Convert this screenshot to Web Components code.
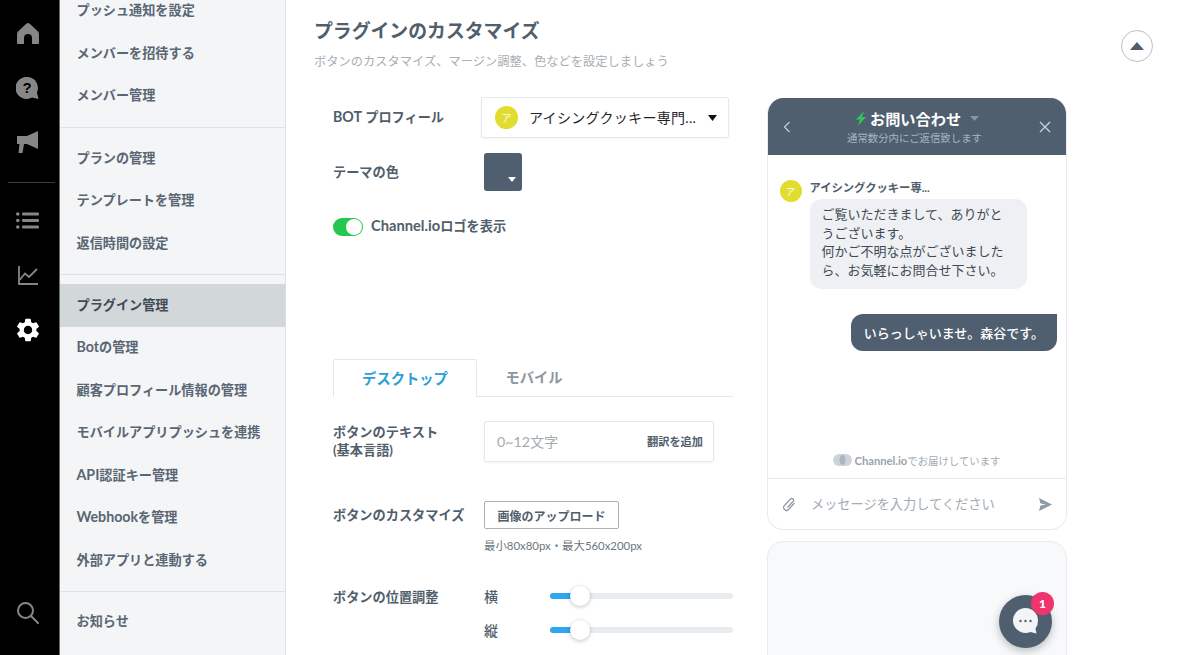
<!DOCTYPE html>
<html lang="ja">
<head>
<meta charset="utf-8">
<title>プラグインのカスタマイズ</title>
<style>
  html, body { margin: 0; height: 655px; overflow: hidden; background: #fff; }
  body { display: flex; font-family: Lato, "Noto Sans CJK JP", sans-serif; color: #515e6b; }
  .la { font-size: 14.2px; }
</style>
</head>
<body>
<app-rail></app-rail>
<side-nav>
  <nav-group>
    <nav-item>プッシュ通知を設定</nav-item>
    <nav-item>メンバーを招待する</nav-item>
    <nav-item>メンバー管理</nav-item>
  </nav-group>
  <nav-group>
    <nav-item>プランの管理</nav-item>
    <nav-item>テンプレートを管理</nav-item>
    <nav-item>返信時間の設定</nav-item>
  </nav-group>
  <nav-group>
    <nav-item active>プラグイン管理</nav-item>
    <nav-item><span class="la">Bot</span>の管理</nav-item>
    <nav-item>顧客プロフィール情報の管理</nav-item>
    <nav-item>モバイルアプリプッシュを連携</nav-item>
    <nav-item><span class="la">API</span>認証キー管理</nav-item>
    <nav-item><span class="la">Webhook</span>を管理</nav-item>
    <nav-item>外部アプリと連動する</nav-item>
  </nav-group>
  <nav-group>
    <nav-item>お知らせ</nav-item>
  </nav-group>
</side-nav>
<plugin-page></plugin-page>

<script>
// shadow root helper, every element below uses it
function shadow(el, html) {
  const template = document.createElement('template');
  template.innerHTML = html;
  el.attachShadow({ mode: 'open' }).appendChild(template.content.cloneNode(true));
}

class AppRail extends HTMLElement {
  connectedCallback() {
    shadow(this, `
    <style>
      :host { display: flex; flex-direction: column; flex: none; width: 60px; height: 655px; box-sizing: border-box; background: #000; border-right: 1px solid #6d6d6d; padding: 6px 4px 15px 0; }
      .i { height: 54.7px; display: flex; align-items: center; justify-content: center; flex: none; }
      svg { display: block; fill: #868686; }
      hr { border: 0; height: 1px; background: #3d3d3d; margin: 12px 0 10px 8px; flex: none; }
      .end { margin-top: auto; }
      text { font: 700 15px "Liberation Sans", sans-serif; fill: #000; }
    </style>
    <div class="i"><svg width="22" height="22" viewBox="0 0 22 22"><path d="M11 1 Q12 1 13 2 L21 9.5 Q22 10.5 22 12 V21 Q22 22 21 22 H15 V16 a4 4 0 0 0 -8 0 V22 H1 Q0 22 0 21 V12 Q0 10.5 1 9.5 L9 2 Q10 1 11 1Z"/></svg></div>
    <div class="i"><svg width="23" height="23" viewBox="0 0 23 23"><path d="M11 0 a11 11 0 0 1 10 15.5 L22.5 22 L16 20.5 A11 11 0 1 1 11 0Z"/><text x="11" y="16" text-anchor="middle">?</text></svg></div>
    <div class="i"><svg width="22" height="23" viewBox="0 0 22 23"><path d="M21 0 V18 L10 13 H7 L5.5 22 H1.5 L2.5 13 H0 V5 H10Z"/></svg></div>
    <hr>
    <div class="i"><svg width="23" height="17" viewBox="0 0 23 17"><circle cx="1.8" cy="2" r="1.8"/><circle cx="1.8" cy="8.5" r="1.8"/><circle cx="1.8" cy="15" r="1.8"/><rect x="6" y="0.5" width="17" height="3" rx="1"/><rect x="6" y="7" width="17" height="3" rx="1"/><rect x="6" y="13.5" width="17" height="3" rx="1"/></svg></div>
    <div class="i"><svg width="20" height="19" viewBox="0 0 20 19" style="fill:none;stroke:#868686;stroke-width:1.8"><path d="M1 0 V18 H20"/><path d="M1.5 14 L7 7.5 L11 11 L19 3"/></svg></div>
    <div class="i"><svg width="28" height="28" viewBox="0 0 24 24" style="fill:#fff"><path d="M19.14 12.94c.04-.3.06-.61.06-.94 0-.32-.02-.64-.07-.94l2.03-1.58c.18-.14.23-.41.12-.61l-1.92-3.32c-.12-.22-.37-.29-.59-.22l-2.39.96c-.5-.38-1.03-.7-1.62-.94l-.36-2.54c-.04-.24-.24-.41-.48-.41h-3.84c-.24 0-.43.17-.47.41l-.36 2.54c-.59.24-1.13.57-1.62.94l-2.39-.96c-.22-.08-.47 0-.59.22L2.74 8.87c-.12.21-.08.47.12.61l2.03 1.58c-.05.3-.09.63-.09.94s.02.64.07.94l-2.03 1.58c-.18.14-.23.41-.12.61l1.92 3.32c.12.22.37.29.59.22l2.39-.96c.5.38 1.03.7 1.62.94l.36 2.54c.05.24.24.41.48.41h3.84c.24 0 .44-.17.47-.41l.36-2.54c.59-.24 1.13-.56 1.62-.94l2.39.96c.22.08.47 0 .59-.22l1.92-3.32c.12-.22.07-.47-.12-.61l-2.01-1.58zM12 15.6c-1.98 0-3.6-1.62-3.6-3.6s1.62-3.6 3.6-3.6 3.6 1.62 3.6 3.6-1.62 3.6-3.6 3.6z"/></svg></div>
    <div class="i end"><svg width="22" height="22" viewBox="0 0 22 22" style="fill:none;stroke:#868686;stroke-width:2"><circle cx="8.5" cy="8.5" r="7.5"/><path d="M14 14 L21 21" stroke-linecap="round"/></svg></div>
    `);
  }
}

class SideNav extends HTMLElement {
  constructor() {
    super();
    shadow(this, `
    <style>
      :host { display: block; flex: none; width: 226px; height: 655px; box-sizing: border-box; background: #f3f5f7; border-right: 1px solid #dcdfe2; overflow: hidden; }
      .scroll { margin-top: -10.5px; }
    </style>
    <div class="scroll"><slot></slot></div>`);
  }
}

class NavGroup extends HTMLElement {
  constructor() {
    super();
    shadow(this, `
    <style>
      :host { display: block; padding: 9px 0 10px; border-bottom: 1px solid #dfe2e5; }
      :host(:first-child) { padding-top: 0; }
      :host(:nth-child(2)) { padding-bottom: 9.5px; }
      :host(:nth-child(3)) { padding-bottom: 9px; }
      :host(:last-child) { border-bottom: 0; }
    </style>
    <slot></slot>`);
  }
}

class NavItem extends HTMLElement {
  constructor() {
    super();
    shadow(this, `
    <style>
      :host { display: flex; align-items: center; height: 42.5px; box-sizing: border-box; padding: 0 0 2px 16.5px; font-size: 13.15px; font-weight: 700; color: #5a6673; white-space: nowrap; }
      :host([active]) { background: #d2d7da; color: #3f4a55; }
    </style>
    <slot></slot>`);
  }
}

class PluginPage extends HTMLElement {
  connectedCallback() {
    shadow(this, `
    <style>
      :host { display: block; flex: 1; min-width: 0; height: 655px; overflow: hidden; }
      .head { display: flex; justify-content: space-between; height: 97px; box-sizing: border-box; padding: 19px 47px 0 28px; }
      h1 { margin: 0; font-size: 18.85px; line-height: 24px; font-weight: 700; color: #515e6b; }
      .sub { margin-top: 9px; font-size: 12.25px; line-height: 20px; color: #a7aeb4; }
      .top { width: 32px; height: 32px; box-sizing: border-box; margin-top: 11px; border: 1px solid #bdc0c3; border-radius: 50%; display: flex; align-items: center; justify-content: center; }
      .body { display: flex; gap: 34px; padding-left: 47px; }
      .form { width: 400px; flex: none; }
      .la { font-size: 14.7px; }
      .mt15 { margin-top: 15px; }
      .mt27 { margin-top: 27px; }
      .mt123 { margin-top: 123px; }
      .mt24 { margin-top: 24px; }
      .mt39 { margin-top: 39px; }
      .mt25 { margin-top: 25px; }
    </style>
    <div class="head">
      <div><h1>プラグインのカスタマイズ</h1><div class="sub">ボタンのカスタマイズ、マージン調整、色などを設定しましょう</div></div>
      <div class="top"><svg width="14" height="9" viewBox="0 0 14 9"><path d="M7 0 L14 8 H0Z" fill="#4f5f70"/></svg></div>
    </div>
    <div class="body">
      <div class="form">
        <form-row label="&lt;span class='la'&gt;BOT&lt;/span&gt; プロフィール" col="148"><bot-select></bot-select></form-row>
        <form-row class="mt15" label="テーマの色" col="151"><color-swatch></color-swatch></form-row>
        <logo-toggle class="mt27"><span class="la">Channel.io</span>ロゴを表示</logo-toggle>
        <device-tabs class="mt123"></device-tabs>
        <form-row class="mt24" label="ボタンのテキスト&lt;br&gt;(基本言語)" col="151"><text-field></text-field></form-row>
        <form-row class="mt39" label="ボタンのカスタマイズ" col="151" top pad="5"><upload-field></upload-field></form-row>
        <form-row class="mt25" label="ボタンの位置調整" col="151" top pad="9">
          <range-row name="横"></range-row>
          <range-row name="縦"></range-row>
        </form-row>
      </div>
      <chat-preview></chat-preview>
    </div>`);
  }
}

class FormRow extends HTMLElement {
  connectedCallback() {
    const col = this.getAttribute('col');
    const pad = this.getAttribute('pad') || 0;
    shadow(this, `
    <style>
      :host { display: grid; grid-template-columns: ${col}px 1fr; align-items: center; }
      :host([top]) { align-items: start; }
      .l { font-size: 13.2px; font-weight: 700; line-height: 18px; color: #515e6b; white-space: nowrap; padding-top: ${pad}px; padding-bottom: 1px; }
      .la { font-size: 14.2px; }
    </style>
    <div class="l">${this.getAttribute('label')}</div>
    <div><slot></slot></div>`);
  }
}

class BotSelect extends HTMLElement {
  constructor() {
    super();
    shadow(this, `
    <style>
      :host { display: flex; align-items: center; width: 248px; height: 41px; box-sizing: border-box; border: 1px solid #e6e8ea; border-radius: 2px; box-shadow: 0 1px 2px #0000000d; padding: 0 11px 0 13px; }
      .a { width: 23px; height: 23px; border-radius: 50%; background: #e1dc2e; color: #fff; font-size: 10px; display: flex; align-items: center; justify-content: center; flex: none; }
      .t { margin-left: 11px; padding-bottom: 2px; font-size: 14px; color: #1f2428; white-space: nowrap; flex: 1; letter-spacing: .3px; }
    </style>
    <div class="a">ア</div><div class="t">アイシングクッキー専門...</div>
    <svg width="9" height="6" viewBox="0 0 9 6"><path d="M0 0 H9 L4.5 6Z" fill="#111"/></svg>`);
  }
}

class ColorSwatch extends HTMLElement {
  constructor() {
    super();
    shadow(this, `
    <style>
      :host { display: flex; align-items: flex-end; justify-content: flex-end; width: 38px; height: 38px; box-sizing: border-box; background: #4f5f70; border-radius: 3px; padding: 0 6px 9px 0; }
    </style>
    <svg width="8" height="5" viewBox="0 0 8 5"><path d="M0 0 H8 L4 5Z" fill="#fff"/></svg>`);
  }
}

class LogoToggle extends HTMLElement {
  constructor() {
    super();
    shadow(this, `
    <style>
      :host { display: flex; align-items: center; gap: 8px; height: 18px; font-size: 13.2px; font-weight: 700; color: #515e6b; }
      .sw { width: 30px; height: 18px; box-sizing: border-box; border-radius: 9px; background: #24c84f; display: flex; justify-content: flex-end; padding: 1px; flex: none; }
      .sw i { width: 16px; height: 16px; border-radius: 50%; background: #fff; }
      .tx { padding-bottom: 3px; white-space: nowrap; }
    </style>
    <div class="sw"><i></i></div><div class="tx"><slot></slot></div>`);
  }
}

class DeviceTabs extends HTMLElement {
  constructor() {
    super();
    shadow(this, `
    <style>
      :host { display: flex; height: 38px; box-sizing: border-box; border-bottom: 1px solid #e6e8ea; font-size: 14.3px; font-weight: 700; }
      div { display: flex; align-items: center; justify-content: center; height: 38px; box-sizing: border-box; padding-bottom: 3px; }
      .on { width: 144px; color: #2a9fd8; background: #fff; border: 1px solid #e6e8ea; border-bottom: 0; border-radius: 2px 2px 0 0; }
      .off { width: 114px; color: #8f979e; }
    </style>
    <div class="on">デスクトップ</div><div class="off">モバイル</div>`);
  }
}

class TextField extends HTMLElement {
  constructor() {
    super();
    shadow(this, `
    <style>
      :host { display: flex; align-items: center; justify-content: space-between; width: 230px; height: 41px; box-sizing: border-box; border: 1px solid #e6e8ea; border-radius: 2px; box-shadow: 0 1px 2px #0000000d; padding: 0 10px 2px 12px; }
      .p { font-size: 14.2px; color: #a4abb1; }
      .b { font-size: 11.2px; font-weight: 700; color: #515e6b; }
    </style>
    <span class="p">0~12文字</span><span class="b">翻訳を追加</span>`);
  }
}

class UploadField extends HTMLElement {
  constructor() {
    super();
    shadow(this, `
    <style>
      :host { display: block; }
      .b { display: flex; align-items: center; justify-content: center; width: 135px; height: 28px; box-sizing: border-box; border: 1px solid #a9b0b6; border-radius: 2px; font-size: 12px; font-weight: 700; color: #515e6b; }
      .h { margin-top: 9px; font-size: 11.4px; line-height: 16px; color: #6b7680; white-space: nowrap; }
    </style>
    <div class="b">画像のアップロード</div><div class="h">最小80x80px・最大560x200px</div>`);
  }
}

class RangeRow extends HTMLElement {
  connectedCallback() {
    shadow(this, `
    <style>
      :host { display: flex; align-items: center; height: 34px; width: 249px; }
      span { width: 66px; font-size: 14px; font-weight: 500; color: #515e6b; flex: none; }
      .track { flex: 1; height: 6px; border-radius: 3px; background: #e9ecee; display: flex; align-items: center; }
      .fill { width: 25px; height: 6px; border-radius: 3px 0 0 3px; background: #2ea7ee; }
      .knob { width: 20px; height: 20px; border-radius: 50%; background: #fff; box-shadow: 0 1px 4px #00000040; margin-left: -5px; }
    </style>
    <span>${this.getAttribute('name')}</span>
    <div class="track"><div class="fill"></div><div class="knob"></div></div>`);
  }
}

class ChatPreview extends HTMLElement {
  connectedCallback() {
    shadow(this, `
    <style>
      :host { display: block; width: 300px; flex: none; position: relative; margin-top: 1px; }
      .card { height: 432px; box-sizing: border-box; border: 1.5px solid #e9ebee; border-top: 0; border-radius: 16px; overflow: hidden; display: flex; flex-direction: column; background: #fff; }
      .hd { height: 57px; flex: none; background: #4f5f70; display: grid; grid-template-columns: 40px 1fr 40px; align-items: center; justify-items: center; box-sizing: border-box; }
      .bk { margin-right: 3px; }
      .cl { margin-right: 3px; }
      .ti { display: flex; align-items: center; justify-content: center; gap: 3px; font-size: 15.2px; font-weight: 700; line-height: 22px; color: #fff; }
      .su { font-size: 10.4px; line-height: 15px; padding: 1px 5px 0 0; color: #a9b4bf; text-align: center; }
      .msgs { flex: 1; display: flex; flex-direction: column; padding-top: 25px; }
      .who { display: grid; grid-template-columns: 22px 1fr; column-gap: 8px; padding-left: 11.5px; }
      .av { width: 22px; height: 22px; border-radius: 50%; background: #e1dc2e; color: #fff; font-size: 9px; display: flex; align-items: center; justify-content: center; }
      .nm { font-size: 11.3px; font-weight: 700; line-height: 16px; color: #515e6b; }
      .bub { grid-column: 2; width: 217px; box-sizing: border-box; padding: 6px 12px 10px; background: #eef0f3; border-radius: 12px; font-size: 13px; line-height: 18.5px; color: #3f4a55; margin-top: -3px; }
      .me { align-self: flex-end; margin: 25px 9.5px 0 0; padding: 0 12.5px 1px; height: 37px; display: flex; align-items: center; box-sizing: border-box; background: #4f5f70; color: #fff; border-radius: 12px 0 12px 12px; font-size: 13px; font-weight: 500; white-space: nowrap; }
      .pw { margin-top: auto; display: flex; align-items: center; justify-content: center; gap: 3px; height: 18px; margin-bottom: 9px; padding-right: 1px; font-size: 10.4px; color: #a3abb3; }
      .pw b { color: #9aa3ac; font-size: 11.2px; }
      .inp { height: 50px; flex: none; border-top: 1px solid #e6e8ea; display: flex; align-items: center; padding: 0 14px; gap: 15px; }
      .inp span { flex: 1; font-size: 13.2px; padding-bottom: 1px; color: #a3abb3; white-space: nowrap; }
      .card2 { margin-top: 11px; height: 200px; box-sizing: border-box; border: 1.5px solid #e9ebee; border-radius: 16px; background: #f7f9fb; }
      .fab { position: absolute; left: 232px; top: 497px; width: 53px; height: 53px; border-radius: 50%; background: #4f5f70; box-shadow: 0 3px 8px #00000040; display: flex; align-items: center; justify-content: center; }
      .badge { position: absolute; left: 32px; top: -3px; width: 23px; height: 23px; border-radius: 50%; background: #f0346e; color: #fff; font-size: 12px; font-weight: 900; display: flex; align-items: center; justify-content: center; }
    </style>
    <div class="card">
      <div class="hd">
        <svg class="bk" width="8" height="12" viewBox="0 0 8 12"><path d="M6.5 1 L1.5 6 L6.5 11" fill="none" stroke="#c3cad1" stroke-width="1.3"/></svg>
        <div>
          <div class="ti"><svg width="12" height="15" viewBox="0 0 13 16"><path d="M10 0 L1 9 H5.5 L3 16 L12 6.5 H7.5Z" fill="#2fc65c"/></svg><span>お問い合わせ</span><svg style="margin-left:6px" width="9" height="5" viewBox="0 0 9 5"><path d="M0 0 H9 L4.5 5Z" fill="#8896a3"/></svg></div>
          <div class="su">通常数分内にご返信致します</div>
        </div>
        <svg class="cl" width="12" height="12" viewBox="0 0 12 12"><path d="M1 1 L11 11 M11 1 L1 11" fill="none" stroke="#c9d0d6" stroke-width="1.4"/></svg>
      </div>
      <div class="msgs">
        <div class="who">
          <div class="av">ア</div><div class="nm">アイシングクッキー専...</div>
          <div class="bub">ご覧いただきまして、ありがとうございます。<br>何かご不明な点がございましたら、お気軽にお問合せ下さい。</div>
        </div>
        <div class="me">いらっしゃいませ。森谷です。</div>
        <div class="pw"><svg width="19" height="12" viewBox="0 0 19 12"><rect width="19" height="12" rx="6" fill="#ccd3da"/><ellipse cx="9.5" cy="6" rx="3" ry="5" fill="#a9b5c0"/></svg><span><b>Channel.io</b>でお届けしています</span></div>
      </div>
      <div class="inp">
        <svg width="14" height="15" viewBox="0 0 14 15"><path d="M12.5 6 L6.5 12.5 a2.8 2.8 0 0 1 -4 -4 L8.5 2 a1.8 1.8 0 0 1 2.6 2.5 L5.5 10.5" fill="none" stroke="#8e9aa6" stroke-width="1.2"/></svg>
        <span>メッセージを入力してください</span>
        <svg width="13" height="13" viewBox="0 0 13 13"><path d="M0 0 L13 6.5 L0 13 L1.5 7.5 L7 6.5 L1.5 5.5Z" fill="#8e9aa6"/></svg>
      </div>
    </div>
    <div class="card2"></div>
    <div class="fab">
      <svg width="26" height="27" viewBox="0 0 26 27"><path d="M12.5 0 a12.5 12.5 0 0 1 12.5 12.5 q0 5 -2.5 8 l1 5 l-6 -1.5 q-2 1 -5 1 a12.5 12.5 0 0 1 0 -25Z" fill="#f3f4f5"/><circle cx="7.5" cy="13" r="1.2" fill="#4f5f70"/><circle cx="12.5" cy="13" r="1.2" fill="#4f5f70"/><circle cx="17.5" cy="13" r="1.2" fill="#4f5f70"/></svg>
      <div class="badge">1</div>
    </div>`);
  }
}

customElements.define('app-rail', AppRail);
customElements.define('side-nav', SideNav);
customElements.define('nav-group', NavGroup);
customElements.define('nav-item', NavItem);
customElements.define('plugin-page', PluginPage);
customElements.define('form-row', FormRow);
customElements.define('bot-select', BotSelect);
customElements.define('color-swatch', ColorSwatch);
customElements.define('logo-toggle', LogoToggle);
customElements.define('device-tabs', DeviceTabs);
customElements.define('text-field', TextField);
customElements.define('upload-field', UploadField);
customElements.define('range-row', RangeRow);
customElements.define('chat-preview', ChatPreview);
</script>
</body>
</html>
